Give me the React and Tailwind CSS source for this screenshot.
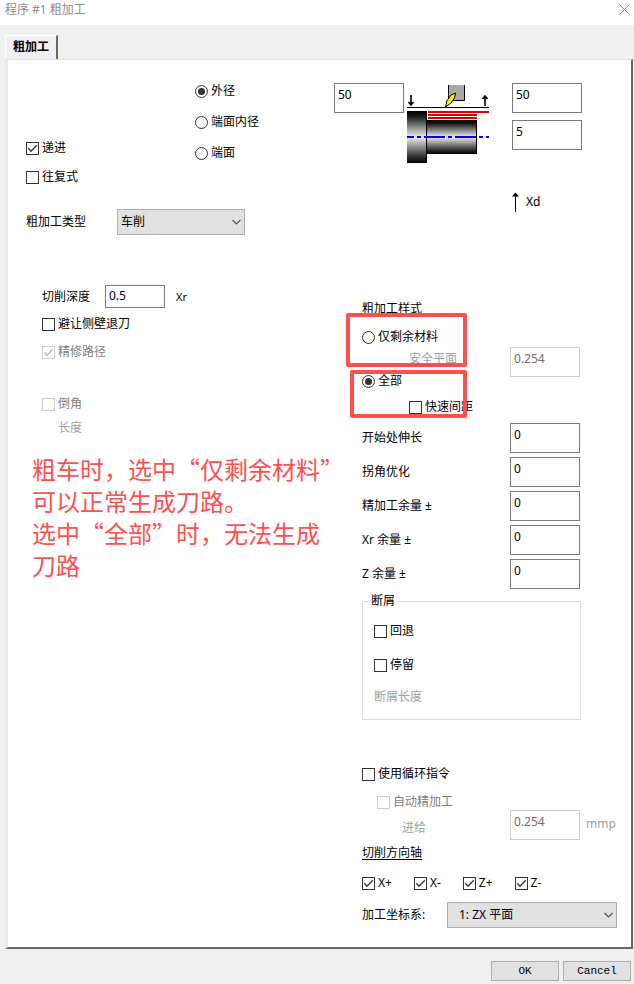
/**
 * CheckField — square tick box with its label.
 */
const CheckField = ({ label, checked = false, disabled = false }) => (
  <label className={`flex h-[18px] w-fit items-center gap-[3px] ${disabled ? "text-[#808080]" : "text-black"}`}>
    <span className="grid size-[13px] place-items-center">
      <input
        type="checkbox"
        defaultChecked={checked}
        disabled={disabled}
        className="peer size-[13px] appearance-none border border-[#333333] bg-white [grid-area:1/1] disabled:border-[#cccccc]"
      />
      <svg
        className="pointer-events-none invisible size-[13px] text-[#333333] [grid-area:1/1] peer-checked:visible peer-disabled:text-[#b5b5b5]"
        viewBox="0 0 13 13"
        fill="none"
        stroke="currentColor"
        strokeWidth="1.3"
      >
        <path d="M2.3 6.3L5 9.2L10.8 3.2" />
      </svg>
    </span>
    {label}
  </label>
);

/**
 * RadioField — round option button with its label.
 */
const RadioField = ({ name, label, checked = false }) => (
  <label className="flex h-[18px] w-fit items-center gap-[3px]">
    <span className="grid size-[13px] place-items-center">
      <input
        type="radio"
        name={name}
        defaultChecked={checked}
        className="peer size-[13px] appearance-none rounded-full border border-[#333333] bg-white [grid-area:1/1]"
      />
      <span className="pointer-events-none invisible size-[7px] rounded-full bg-[#333333] [grid-area:1/1] peer-checked:visible" />
    </span>
    {label}
  </label>
);

/**
 * NumberBox — tall edit box, the value sits near the top.
 */
const NumberBox = ({ id, label, value, disabled = false }) => (
  <input
    id={id}
    type="text"
    aria-label={label}
    defaultValue={value}
    disabled={disabled}
    className="h-[30px] w-[70px] shrink-0 border border-[#7a7a7a] bg-white px-[3px] pb-[8px] text-black disabled:border-[#cccccc] disabled:text-[#6d6d6d]"
  />
);

/**
 * Dropdown — flat grey select with a thin chevron.
 */
const Dropdown = ({ id, option, className, padding }) => (
  <div className={`relative h-[26px] ${className}`}>
    <select
      id={id}
      className={`size-full appearance-none border border-[#adadad] bg-[#e1e1e1] pr-6 text-black ${padding}`}
    >
      <option>{option}</option>
    </select>
    <svg
      className="pointer-events-none absolute top-[9px] right-1 h-2 w-[9px]"
      viewBox="0 0 9 8"
      fill="none"
      stroke="#505050"
      strokeWidth="1.1"
    >
      <path d="M0.5 2L4.5 6L8.5 2" />
    </svg>
  </div>
);

/* Turned part with the tool, the passes and the centre line */
const TurningDiagram = () => (
  <svg className="mt-[2px] h-[78px] w-[82px] shrink-0" viewBox="0 0 82 78" role="img" aria-label="外径">
    <defs>
      <linearGradient id="metal" x1="0" y1="0" x2="0" y2="1">
        <stop offset="0" stopColor="#000000" />
        <stop offset="0.1" stopColor="#161616" />
        <stop offset="0.5" stopColor="#f0f0f0" />
        <stop offset="0.9" stopColor="#262626" />
        <stop offset="1" stopColor="#000000" />
      </linearGradient>
    </defs>
    <rect x="0" y="26" width="20" height="52" fill="url(#metal)" />
    <rect x="20" y="35" width="50" height="34" fill="url(#metal)" />
    <path d="M19.5 26V78M69.5 35V69M19 35.5H70M19 68.5H70" stroke="#000000" fill="none" />
    <path d="M0 22.5H82" stroke="#000000" />
    <path d="M21 27H82M21 30H70M21 33H70" stroke="#e00000" strokeWidth="2" />
    <path
      d="M0 52H7M10 52H14M17 52H38M41 52H45M48 52H69M72 52H76M79 52H82"
      stroke="#0000ff"
      strokeWidth="2"
    />
    <rect x="41" y="0" width="17" height="16" fill="#a8a8a8" />
    <path d="M41.5 0V15.5H57.5V0" stroke="#000000" fill="none" />
    <path d="M38.5 22L40 15.5L44 10L48.5 8L47.5 13L43.5 18.5Z" fill="#ffee00" stroke="#000000" />
    <path d="M4 10V20M1.5 17L4 20L6.5 17" stroke="#000000" strokeWidth="1.6" fill="none" />
    <path d="M78 21V11M75.5 14L78 11L80.5 14" stroke="#000000" strokeWidth="1.6" fill="none" />
  </svg>
);

const allowances = [
  { id: "extend", label: "开始处伸长" },
  { id: "corner", label: "拐角优化" },
  { id: "finish", label: "精加工余量 ±" },
  { id: "xr", label: "Xr 余量 ±" },
  { id: "z", label: "Z 余量 ±" },
];

const App = () => (
  <div className="flex min-h-screen flex-col bg-[#f0f0f0] font-['Noto_Sans','Noto_Sans_CJK_SC',sans-serif] text-xs leading-[18px] text-black">
    {/* Title bar */}
    <header className="flex h-[25px] items-start justify-between bg-white px-[5px] pt-px">
      <h1 className="text-[#8c8c8c]">程序 #1 粗加工</h1>
      <button type="button" aria-label="关闭" className="-mr-px pt-[3px]">
        <svg className="size-[11px]" viewBox="0 0 11 11" stroke="#8c8c8c" fill="none">
          <path d="M0.5 0.5L10.5 10.5M10.5 0.5L0.5 10.5" />
        </svg>
      </button>
    </header>

    {/* Tab */}
    <div className="flex px-[5px] pt-[10px]">
      <button
        type="button"
        className="h-6 border-t border-r-2 border-l border-t-white border-r-[#696969] border-l-white px-[7px] pb-px font-bold"
      >
        粗加工
      </button>
    </div>

    {/* Tab page */}
    <main className="mr-[1px] ml-[5px] grid grow grid-cols-[326px_1fr] border-t border-r-2 border-b-2 border-l-3 border-t-[#e3e3e3] border-r-[#696969] border-b-[#696969] border-l-[#e9e9e9] bg-white pb-[19px]">
      {/* Left column */}
      <section>
        <div className="flex pl-[18px]">
          <div className="flex w-[169px] flex-col gap-[11px] pt-[79px]">
            <CheckField label="递进" checked />
            <CheckField label="往复式" />
          </div>
          <div className="flex flex-col gap-[13px] pt-[22px]">
            <RadioField name="side" label="外径" checked />
            <RadioField name="side" label="端面内径" />
            <RadioField name="side" label="端面" />
          </div>
        </div>

        <div className="mt-[23px] flex items-center pl-[18px]">
          <label htmlFor="type" className="w-[91px]">
            粗加工类型
          </label>
          <Dropdown id="type" option="车削" className="w-[128px]" padding="pl-[3px]" />
        </div>

        <div className="mt-[50px] pl-[34px]">
          <div className="flex items-center">
            <label htmlFor="depth" className="w-[63px]">
              切削深度
            </label>
            <input
              id="depth"
              type="text"
              defaultValue="0.5"
              className="h-[23px] w-[60px] border border-[#7a7a7a] bg-white px-[3px] pb-[3px]"
            />
            <span className="pl-[11px] text-[11px]">Xr</span>
          </div>
          <div className="mt-[7px] flex flex-col gap-[10px]">
            <CheckField label="避让侧壁退刀" />
            <CheckField label="精修路径" checked disabled />
          </div>
          <div className="mt-[34px]">
            <CheckField label="倒角" disabled />
          </div>
          <p className="mt-[6px] pl-4 text-[#a0a0a0]">长度</p>
        </div>

        <p className="mt-4 pl-6 font-['Noto_Sans_CJK_SC',sans-serif] text-2xl leading-8 whitespace-nowrap text-[#ff5050]">
          粗车时，选中“仅剩余材料”
          <br />
          可以正常生成刀路。
          <br />
          选中“全部”时，无法生成
          <br />
          刀路
        </p>
      </section>

      {/* Right column */}
      <section>
        <div className="flex pt-[23px]">
          <NumberBox label="起点直径" value="50" />
          <div className="flex gap-[23px] pl-[3px]">
            <TurningDiagram />
            <div>
              <div className="flex flex-col gap-[7px]">
                <NumberBox label="终点直径" value="50" />
                <NumberBox label="内径" value="5" />
              </div>
              <div className="mt-[42px] flex items-center gap-[7px]">
                <svg className="h-5 w-[7px]" viewBox="0 0 7 20">
                  <path d="M3 3H4V20H3Z" />
                  <path d="M3.5 0.5L7 4.5H0Z" />
                </svg>
                Xd
              </div>
            </div>
          </div>
        </div>

        <div className="mt-[88px] pl-7">
          {/* Roughing style, with the two marked options */}
          <div className="relative flex">
            <div className="w-[148px]">
              <p>粗加工样式</p>
              <div className="mt-[10px]">
                <RadioField name="style" label="仅剩余材料" />
              </div>
              <label htmlFor="clearance" className="mt-1 block pl-[47px] text-[#a0a0a0]">
                安全平面
              </label>
              <div className="mt-1">
                <RadioField name="style" label="全部" checked />
              </div>
              <div className="mt-2 pl-[47px]">
                <CheckField label="快速间距" />
              </div>
            </div>
            <div className="pt-[47px]">
              <NumberBox id="clearance" value="0.254" disabled />
            </div>
            <div className="pointer-events-none absolute top-[13px] -left-4 h-[54px] w-[121px] rounded-xs border-4 border-[#ff5050]" />
            <div className="pointer-events-none absolute top-[70px] -left-3 h-[48px] w-[117px] rounded-xs border-4 border-[#ff5050]" />
          </div>

          <div className="mt-[7px] flex flex-col gap-1">
            {allowances.map(({ id, label }) => (
              <div key={id} className="flex items-center">
                <label htmlFor={id} className="w-[148px]">
                  {label}
                </label>
                <NumberBox id={id} value="0" />
              </div>
            ))}
          </div>

          {/* Chip breaking */}
          <fieldset className="mt-[3px] h-[128px] w-[219px] border border-[#dcdcdc] pl-[11px]">
            <legend className="-ml-[6px] px-[3px]">断屑</legend>
            <div className="mt-3 flex flex-col gap-4">
              <CheckField label="回退" />
              <CheckField label="停留" />
            </div>
            <p className="mt-[14px] text-[#a0a0a0]">断屑长度</p>
          </fieldset>

          {/* Canned cycle */}
          <div className="mt-[45px] flex">
            <div className="w-[148px]">
              <CheckField label="使用循环指令" />
              <div className="mt-[10px] pl-[15px]">
                <CheckField label="自动精加工" disabled />
              </div>
              <label htmlFor="feed" className="mt-2 block pl-10 text-[#a0a0a0]">
                进给
              </label>
            </div>
            <div className="flex gap-[6px] pt-[45px] text-[#a0a0a0]">
              <NumberBox id="feed" value="0.254" disabled />
              <span className="pt-[5px]">mmp</span>
            </div>
          </div>

          <p className="mt-[4px] underline underline-offset-2">切削方向轴</p>
          <div className="mt-3 flex gap-[22px]">
            <CheckField label="X+" checked />
            <CheckField label="X-" checked />
            <CheckField label="Z+" checked />
            <CheckField label="Z-" checked />
          </div>

          <div className="mt-[10px] flex items-center">
            <label htmlFor="plane" className="w-[85px]">
              加工坐标系:
            </label>
            <Dropdown id="plane" option="1: ZX 平面" className="w-[170px]" padding="pl-[11px]" />
          </div>
        </div>
      </section>
    </main>

    {/* Dialog buttons */}
    <footer className="flex justify-end gap-1 pt-3 pr-[3px] pb-[3px] font-['Liberation_Mono',monospace] text-[11px]">
      <button type="button" className="h-5 w-[68px] border border-[#adadad] bg-[#e1e1e1]">
        OK
      </button>
      <button type="button" className="h-5 w-[68px] border border-[#adadad] bg-[#e1e1e1]">
        Cancel
      </button>
    </footer>
  </div>
);

export default App;
